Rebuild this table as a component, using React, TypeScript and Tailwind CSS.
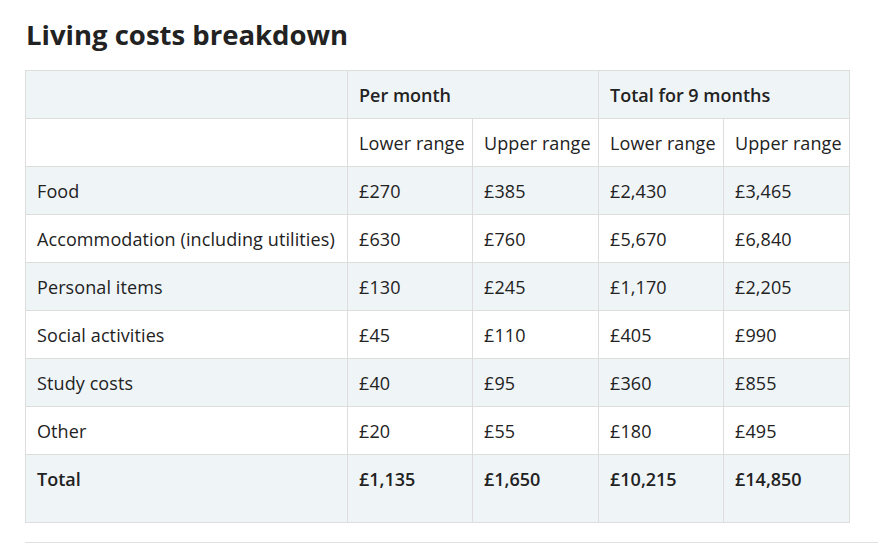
const rows: [string, string, string, string, string][] = [
  ['Food', '£270', '£385', '£2,430', '£3,465'],
  ['Accommodation (including utilities)', '£630', '£760', '£5,670', '£6,840'],
  ['Personal items', '£130', '£245', '£1,170', '£2,205'],
  ['Social activities', '£45', '£110', '£405', '£990'],
  ['Study costs', '£40', '£95', '£360', '£855'],
  ['Other', '£20', '£55', '£180', '£495'],
];

const cell = 'border border-[#dddddd] px-[11px] pt-[12px] pb-[11px] text-left align-top whitespace-nowrap';

export default function App() {
  return (
    <div className="w-[878px] h-[544px] overflow-hidden bg-white text-[#222222] font-['Open_Sans',sans-serif]">
      <h2 className="ml-[26px] pt-[17px] h-[70px] text-[27.5px] leading-[36px] font-bold text-[#222222]">
        Living costs breakdown
      </h2>
      <table className="ml-[25px] w-[825px] table-fixed border-collapse text-[18px] leading-[24px] tracking-[0.1px]">
        <colgroup>
          <col className="w-[322px]" />
          <col className="w-[125px]" />
          <col className="w-[126px]" />
          <col className="w-[125px]" />
          <col className="w-[126px]" />
        </colgroup>
        <thead>
          <tr className="bg-[#eff4f7]">
            <th className={cell}></th>
            <th className={`${cell} font-semibold tracking-normal`} colSpan={2}>Per month</th>
            <th className={`${cell} font-semibold tracking-normal`} colSpan={2}>Total for 9 months</th>
          </tr>
          <tr className="bg-white">
            <td className={cell}></td>
            <td className={cell}>Lower range</td>
            <td className={cell}>Upper range</td>
            <td className={cell}>Lower range</td>
            <td className={cell}>Upper range</td>
          </tr>
        </thead>
        <tbody>
          {rows.map((r, i) => (
            <tr key={r[0]} className={i % 2 === 0 ? 'bg-[#eff4f7]' : 'bg-white'}>
              {r.map((v, j) => (
                <td key={j} className={cell}>{v}</td>
              ))}
            </tr>
          ))}
          <tr className="bg-[#eff4f7] font-semibold tracking-normal">
            {['Total', '£1,135', '£1,650', '£10,215', '£14,850'].map((v) => (
              <td key={v} className="border border-[#dddddd] px-[11px] pt-[12px] pb-[31px] text-left align-top">{v}</td>
            ))}
          </tr>
        </tbody>
      </table>
      <div className="ml-[25px] mt-[19px] border-t border-[#e0e0e0]" />
    </div>
  );
}
